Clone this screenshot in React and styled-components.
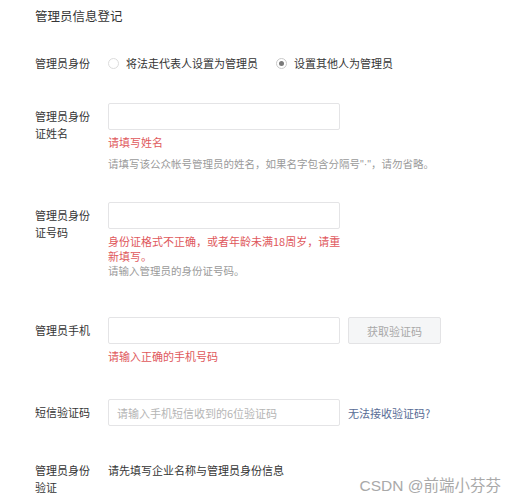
import React from "react";
import styled, { createGlobalStyle } from "styled-components";

const GlobalStyle = createGlobalStyle`
  body {
    margin: 0;
    background: #ffffff;
    font-family: "Noto Sans CJK SC", "Noto Sans", sans-serif;
    color: #353535;
  }
`;

const App = () => {
  return (
    <Page>
      <GlobalStyle />
      <Title>管理员信息登记</Title>

      <Row $top={28} $center>
        <Label $flat>管理员身份</Label>
        <RadioGroup>
          <RadioItem>
            <Radio />
            <span>将法走代表人设置为管理员</span>
          </RadioItem>
          <RadioItem>
            <Radio $checked />
            <span>设置其他人为管理员</span>
          </RadioItem>
        </RadioGroup>
      </Row>

      <Row $top={31}>
        <Label>管理员身份证姓名</Label>
        <Field>
          <Input />
          <Error>请填写姓名</Error>
          <Hint $gap={6}>
            请填写该公众帐号管理员的姓名，如果名字包含分隔号<Latin>"·"</Latin>，请勿省略。
          </Hint>
        </Field>
      </Row>

      <Row $top={30}>
        <Label>管理员身份证号码</Label>
        <Field>
          <Input />
          <Error>身份证格式不正确，或者年龄未满18周岁，请重新填写。</Error>
          <Hint $gap={-1}>请输入管理员的身份证号码。</Hint>
        </Field>
      </Row>

      <Row $top={38}>
        <Label>管理员手机</Label>
        <Field>
          <InputLine>
            <Input />
            <CodeButton>获取验证码</CodeButton>
          </InputLine>
          <Error>请输入正确的手机号码</Error>
        </Field>
      </Row>

      <Row $top={35}>
        <Label>短信验证码</Label>
        <Field>
          <InputLine>
            <Input placeholder="请输入手机短信收到的6位验证码" />
            <HelpLink>无法接收验证码?</HelpLink>
          </InputLine>
        </Field>
      </Row>

      <Row $top={31}>
        <Label>管理员身份验证</Label>
        <Plain>请先填写企业名称与管理员身份信息</Plain>
      </Row>

      <Watermark>CSDN @前端小芬芬</Watermark>
    </Page>
  );
};

export default App;

const Page = styled.div`
  position: relative;
  width: 514px;
  height: 500px;
  box-sizing: border-box;
  padding: 6px 0 0 35px;
  overflow: hidden;
`;

const Title = styled.div`
  font-size: 12.5px;
  line-height: 20px;
  color: #353535;
`;

const Row = styled.div`
  display: grid;
  grid-template-columns: 73px 1fr;
  align-items: ${(p) => (p.$center ? "center" : "start")};
  margin-top: ${(p) => p.$top}px;
`;

const Label = styled.div`
  width: 58px;
  font-size: 11px;
  line-height: 17px;
  padding-top: ${(p) => (p.$flat ? 0 : 5)}px;
  color: #353535;
`;

const RadioGroup = styled.div`
  display: flex;
  align-items: center;
  gap: 18px;
  height: 18px;
`;

const RadioItem = styled.label`
  display: flex;
  align-items: center;
  gap: 7px;
  font-size: 11px;
  line-height: 18px;
  color: #353535;
`;

const Radio = styled.span`
  position: relative;
  width: 9px;
  height: 9px;
  border-radius: 50%;
  border: 1px solid ${(p) => (p.$checked ? "#c9c9c9" : "#dcdcdc")};
  background: #fff;
  &::after {
    content: "";
    display: ${(p) => (p.$checked ? "block" : "none")};
    position: absolute;
    left: 2px;
    top: 2px;
    width: 5px;
    height: 5px;
    border-radius: 50%;
    background: #7a7a7a;
  }
`;

const Field = styled.div`
  display: flex;
  flex-direction: column;
`;

const InputLine = styled.div`
  display: flex;
  align-items: center;
  gap: 8px;
`;

const Input = styled.input`
  width: 232px;
  height: 27px;
  box-sizing: border-box;
  border: 1px solid #e4e4e6;
  border-radius: 2px;
  padding: 0 8px;
  font-family: inherit;
  font-size: 11px;
  outline: none;
  background: #fff;
  &::placeholder {
    color: #b5b5b5;
  }
`;

const CodeButton = styled.button`
  width: 93px;
  height: 27px;
  border: 1px solid #e3e3e5;
  border-radius: 2px;
  background: #f5f6f7;
  color: #a8a8a8;
  font-family: inherit;
  font-size: 11px;
  padding: 0;
`;

const HelpLink = styled.a`
  font-size: 11px;
  color: #576b95;
  text-decoration: none;
  cursor: pointer;
`;

const Error = styled.div`
  width: 236px;
  margin-top: 5px;
  font-size: 11px;
  line-height: 15px;
  color: #e0585c;
`;

const Hint = styled.div`
  margin-top: ${(p) => p.$gap}px;
  font-size: 10.5px;
  line-height: 16px;
  color: #9a9a9a;
  white-space: nowrap;
`;

const Latin = styled.span`
  font-family: "Liberation Sans", sans-serif;
`;

const Plain = styled.div`
  padding-top: 5px;
  font-size: 11px;
  line-height: 17px;
  color: #353535;
`;

const Watermark = styled.div`
  position: absolute;
  right: 13px;
  bottom: 4px;
  font-family: "Liberation Sans", "Noto Sans CJK SC", sans-serif;
  font-size: 15.5px;
  line-height: 20px;
  color: #a9a9a9;
  text-shadow: 0 0 2px #fff;
`;
